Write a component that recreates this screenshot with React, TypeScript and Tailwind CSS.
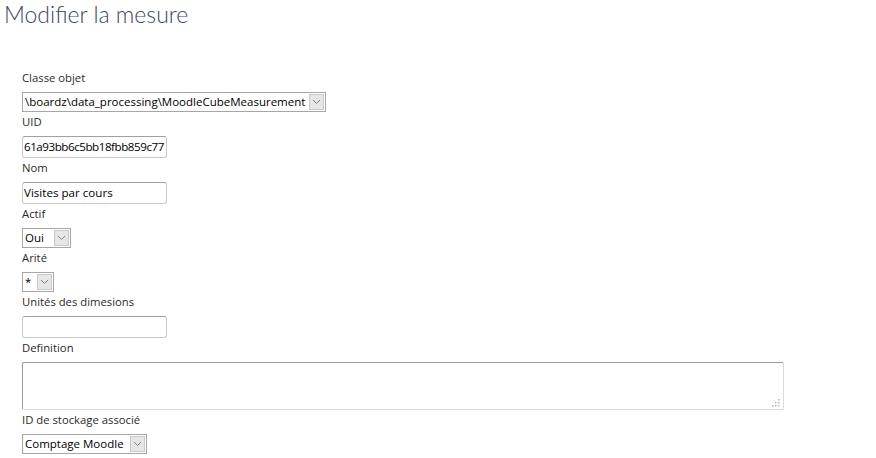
import React from "react";

const labelFont = { fontFamily: '"Open Sans", "Noto Sans", sans-serif' };
const titleFont = { fontFamily: 'Lato, "Open Sans", sans-serif' };

function Chevron() {
  return (
    <svg width="9" height="6" viewBox="0 0 9 6" fill="none">
      <path d="M1 1 L4.5 4.5 L8 1" stroke="#808080" strokeWidth="1" />
    </svg>
  );
}

function Select({ value, width }: { value: string; width: string }) {
  return (
    <div className={`flex h-[20px] items-stretch border border-[#a6a6a6] bg-white ${width}`}>
      <span className="flex-1 overflow-hidden whitespace-nowrap pl-[2px] text-[11.5px] leading-[18px] text-black">{value}</span>
      <span className="m-[1px] flex w-[15px] shrink-0 items-center justify-center border border-[#c9c9c9] bg-[#e6e6e6]">
        <Chevron />
      </span>
    </div>
  );
}

function Label({ children }: { children: React.ReactNode }) {
  return <div className="mb-[6px] h-[18px] pt-[2px] text-[11.3px] leading-[15px] text-[#2b2b2b]">{children}</div>;
}

function Input({ value, tight }: { value?: string; tight?: boolean }) {
  return (
    <div className="flex h-[22px] w-[145px] items-center overflow-hidden rounded-[3px] border border-[#c9c9c9] border-t-[#a0a0a0] bg-white pl-[1px] text-[11.6px] text-black">
      <span className={`whitespace-nowrap ${tight ? "tracking-[-0.45px]" : ""}`}>{value}</span>
    </div>
  );
}

export default function App() {
  return (
    <div className="min-h-[458px] w-[876px] bg-white" style={labelFont}>
      <h1 className="pl-[4px] text-[23px] font-light leading-[28px] text-[#3a485a]" style={titleFont}>
        Modifier la mesure
      </h1>
      <div className="flex flex-col pl-[22px] pt-[40px]">
        <Label>Classe objet</Label>
        <Select value="\boardz\data_processing\MoodleCubeMeasurement" width="w-[304px]" />
        <Label>UID</Label>
        <Input value="61a93bb6c5bb18fbb859c77" tight />
        <Label>Nom</Label>
        <Input value="Visites par cours" />
        <Label>Actif</Label>
        <Select value="Oui" width="w-[49px]" />
        <Label>Arité</Label>
        <Select value="*" width="w-[32px]" />
        <Label>Unités des dimesions</Label>
        <Input />
        <Label>Definition</Label>
        <div className="relative h-[48px] w-[762px] rounded-[2px] border border-[#dcdcdc] border-l-[#9a9a9a] border-t-[#9a9a9a] bg-white">
          <svg className="absolute bottom-[2px] right-[3px]" width="8" height="8" viewBox="0 0 8 8">
            <rect x="6" y="0" width="1.5" height="1.5" fill="#b5b5b5" />
            <rect x="3" y="3" width="1.5" height="1.5" fill="#b5b5b5" />
            <rect x="6" y="3" width="1.5" height="1.5" fill="#b5b5b5" />
            <rect x="0" y="6" width="1.5" height="1.5" fill="#b5b5b5" />
            <rect x="3" y="6" width="1.5" height="1.5" fill="#b5b5b5" />
            <rect x="6" y="6" width="1.5" height="1.5" fill="#b5b5b5" />
          </svg>
        </div>
        <Label>ID de stockage associé</Label>
        <Select value="Comptage Moodle" width="w-[125px]" />
      </div>
    </div>
  );
}
